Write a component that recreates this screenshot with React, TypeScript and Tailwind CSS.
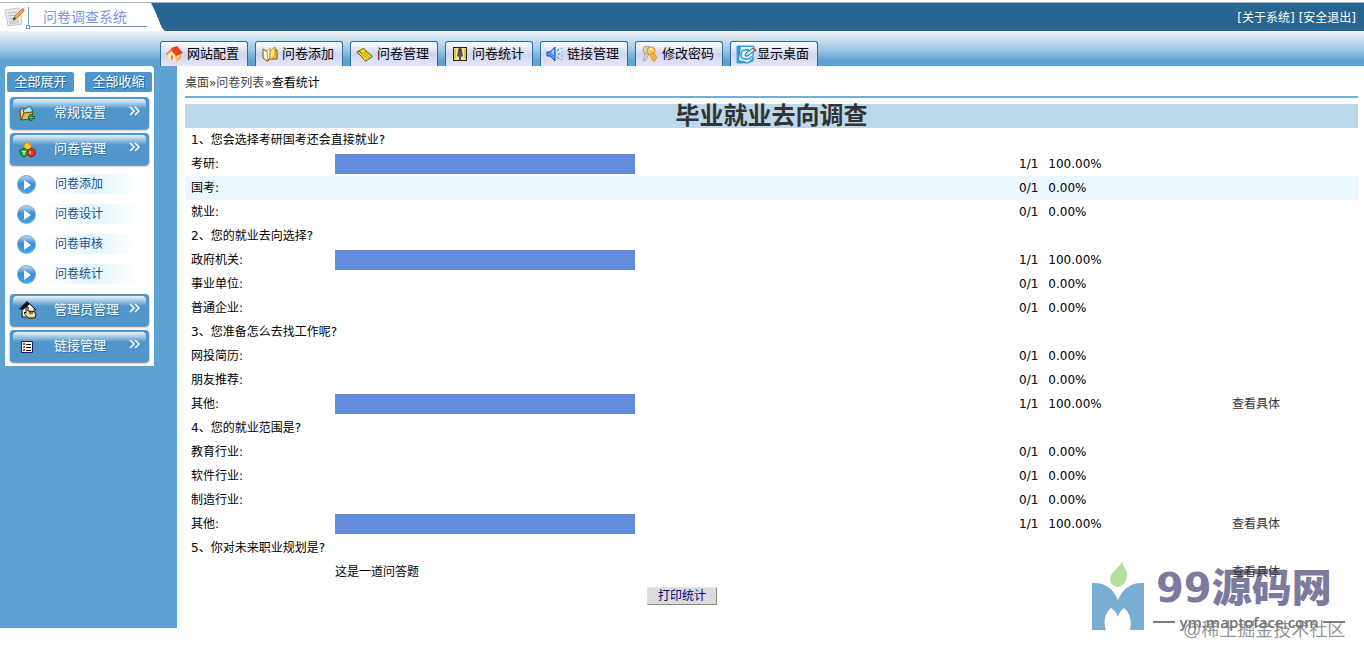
import React from 'react';

type Answer = { label: string; votes: number; total: number; detail?: boolean; active?: boolean };
type Question = { title: string; answers: Answer[]; note?: string };

const questions: Question[] = [
  {
    title: '1、您会选择考研国考还会直接就业?',
    answers: [
      { label: '考研:', votes: 1, total: 1 },
      { label: '国考:', votes: 0, total: 1, active: true },
      { label: '就业:', votes: 0, total: 1 },
    ],
  },
  {
    title: '2、您的就业去向选择?',
    answers: [
      { label: '政府机关:', votes: 1, total: 1 },
      { label: '事业单位:', votes: 0, total: 1 },
      { label: '普通企业:', votes: 0, total: 1 },
    ],
  },
  {
    title: '3、您准备怎么去找工作呢?',
    answers: [
      { label: '网投简历:', votes: 0, total: 1 },
      { label: '朋友推荐:', votes: 0, total: 1 },
      { label: '其他:', votes: 1, total: 1, detail: true },
    ],
  },
  {
    title: '4、您的就业范围是?',
    answers: [
      { label: '教育行业:', votes: 0, total: 1 },
      { label: '软件行业:', votes: 0, total: 1 },
      { label: '制造行业:', votes: 0, total: 1 },
      { label: '其他:', votes: 1, total: 1, detail: true },
    ],
  },
  { title: '5、你对未来职业规划是?', answers: [], note: '这是一道问答题' },
];

const HouseIcon = () => (
  <svg width="18" height="18" viewBox="0 0 18 18">
    <path d="M2 9l4-4 4 5v7l-8-4z" fill="#ffe2ae" />
    <path d="M9 10l6-2v6l-5 3z" fill="#f6b45c" />
    <path d="M0 9l6-6 4 5-1 2-4-4-4 4z" fill="#f3703a" />
    <path d="M5 3l6-2 6 7-7 3z" fill="#e64216" />
    <path d="M5 10l2 1v4l-2-1z" fill="#d08a3a" />
    <path d="M11 11l2-1v2l-2 1z" fill="#fff0c0" />
  </svg>
);

const BookIcon = () => (
  <svg width="18" height="18" viewBox="0 0 18 18">
    <path d="M2 4l5 3v9H6l-4-3z" fill="#fff6cf" stroke="#7a5200" />
    <path d="M6 6l3-3v10l-2 3z" fill="#fff" stroke="#c9a24a" />
    <path d="M7 16l1-2h8V5l-2-1" fill="#ffc936" stroke="#7a5200" />
    <path d="M9 6l5-4v9l-5 4z" fill="#ffe58c" stroke="#b98a18" />
  </svg>
);

const ScrollIcon = () => (
  <svg width="18" height="18" viewBox="0 0 18 18">
    <path d="M1 7l5-3c2-1 3 0 4 2l6 5c0 2-1 2-2 2l-4 3c-2 0-2-2-4-4L3 9C2 9 1 8 1 7z" fill="#f0d92c" stroke="#6d5c00" />
    <path d="M2 7c2-1 3 0 4 2" fill="none" stroke="#6d5c00" />
    <path d="M7 7l6 5M9 6l5 4M6 9l5 4" stroke="#b59d10" />
  </svg>
);

const StatIcon = () => (
  <svg width="18" height="18" viewBox="0 0 18 18">
    <rect x="2.500" y="2.500" width="13" height="13" fill="#ffe08c" stroke="#2c2410" />
    <path d="M7 3h4v12H7z" fill="#fff3c4" />
    <circle cx="9" cy="5" r="2" fill="#444" />
    <path d="M7 6h4l1 5-2 1v3H8v-3l-2-1z" fill="#555" />
    <path d="M4 4v10M14 4v10" stroke="#c69a33" />
  </svg>
);

const SpeakerIcon = () => (
  <svg width="18" height="18" viewBox="0 0 18 18">
    <path d="M1 7h3l5-5v14l-5-5H1z" fill="#4a9cf7" stroke="#1553c4" />
    <path d="M5 7l3-3v6z" fill="#a9d5ff" />
    <path d="M11 6l2-2M12 9h2M11 12l2 2M15 4l1-1M16 7h1M16 11h1M15 14l1 1" stroke="#6f9ff0" strokeWidth="1.500" />
  </svg>
);

const KeysIcon = () => (
  <svg width="18" height="18" viewBox="0 0 18 18">
    <path d="M5 7l-3 8 2 1 4-7" fill="#d8d4c8" stroke="#aaa598" />
    <circle cx="6" cy="5" r="4" fill="#d8d2bc" stroke="#a9a494" />
    <circle cx="10" cy="6" r="4" fill="#ffc94d" stroke="#d6962a" />
    <circle cx="10" cy="4" r="1.200" fill="#fff" />
    <path d="M9 9l3 7h2v-2l2-1-3-5z" fill="#fdb62f" stroke="#d6962a" />
  </svg>
);

const DesktopIcon = () => (
  <svg width="21" height="20" viewBox="0 0 21 20">
    <path d="M1 2h17l-1 15-5 2H1z" fill="#2b94cf" stroke="#4aa6d8" />
    <path d="M5 3h12l-1 12-4 3-9-2z" fill="#f4fbff" />
    <path d="M13 6H9c-3 0-4 2-4 5s1 4 4 4h3c2 0 3-1 3-3" fill="none" stroke="#43b4de" strokeWidth="2" />
    <path d="M9 12l1-3 7-5 2 2-7 6z" fill="#bfe7f5" stroke="#17679b" />
    <path d="M18 5l2 2" stroke="#c24a20" strokeWidth="2" />
  </svg>
);

const FolderIcon = () => (
  <svg width="17" height="17" viewBox="0 0 17 17">
    <path d="M1 5l3-2 2 1v10l-4 1z" fill="#f2cf72" stroke="#5c4a18" />
    <path d="M4 5l7-4 3 5-8 5z" fill="#a5e2f5" stroke="#315a7a" />
    <path d="M2 15l3-7 9-1-2 7z" fill="#e3b557" stroke="#5c4a18" />
    <path d="M12 9v7M9 12.500h7" stroke="#0e6b2a" strokeWidth="3" />
    <path d="M12 10v5M10 12.500h5" stroke="#3ed05c" />
  </svg>
);

const CubesIcon = () => (
  <svg width="17" height="17" viewBox="0 0 17 17">
    <path d="M8 1l4 3v5H5V4z" fill="#ffc832" stroke="#d68a10" />
    <path d="M1 9l4-2 4 2v4l-4 3-4-3z" fill="#28a838" stroke="#0d6b20" />
    <path d="M3 10l2 1 2-1M5 11v3" stroke="#fff" fill="none" />
    <path d="M9 9l3-2 4 2v5l-4 2-3-2z" fill="#e93526" stroke="#a61209" />
    <path d="M11 10v3" stroke="#fff" />
  </svg>
);

const HandHouseIcon = () => (
  <svg width="18" height="18" viewBox="0 0 18 18">
    <path d="M3 9l6-7 7 7-2 2v5H4z" fill="#fff" />
    <path d="M0 8l8-8 3 3-7 6z" fill="#111" />
    <path d="M10 2l7 7h-3M3 9v7h4" fill="none" stroke="#111" />
    <path d="M7 6h2v4h2l5 1 1 2-1 4H9l-4-5 1-1 1 1z" fill="#ffd59a" stroke="#111" />
    <path d="M11 10v3M13 11v2" stroke="#111" />
  </svg>
);

const ListIcon = () => (
  <svg width="17" height="17" viewBox="0 0 17 17">
    <path d="M2.500 3.500h11v11h-11z" fill="#fff" stroke="#1b1b5a" />
    <path d="M4 5h2v2H4zM4 11h2v2H4z" fill="#d42a1c" />
    <path d="M4 8h2v2H4z" fill="#2aa23a" />
    <path d="M7 6.500h5M7 9.500h5M7 12.500h5" stroke="#111" />
  </svg>
);

const PlayIcon = () => (
  <svg width="19" height="19" viewBox="0 0 19 19">
    <defs>
      <linearGradient id="play" x1="0" y1="0" x2="0" y2="1">
        <stop offset="0" stopColor="#c4dcf2" />
        <stop offset="0.450" stopColor="#3b8bd6" />
        <stop offset="1" stopColor="#36abf6" />
      </linearGradient>
    </defs>
    <circle cx="9.500" cy="9.500" r="9" fill="url(#play)" stroke="#7aa7cf" />
    <path d="M7 5l7 5-7 5z" fill="#fff" />
  </svg>
);

const NoteIcon = () => (
  <svg width="20" height="21" viewBox="0 0 20 21">
    <path d="M0 3l13-2 2 2 2 14-14 2z" fill="#e9eaea" stroke="#c3c6c6" />
    <path d="M3 6l9-1M3 9l8-1M4 12l6-1M4 15l10-2M5 17l9-2" stroke="#b3b9bd" />
    <path d="M8 13l2-4 7-7 2 2-7 7z" fill="#f0b04a" stroke="#b57a30" />
    <path d="M16 3l2-2 2 2-2 2z" fill="#d97a68" />
    <path d="M8 13l1-3 2 2z" fill="#333" />
  </svg>
);

const Chevrons = () => (
  <svg width="11" height="10" viewBox="0 0 11 10" fill="none" stroke="#fff" strokeWidth="1.500">
    <path d="M1 1l4 4-4 4M6 1l4 4-4 4" />
  </svg>
);

const tabs = [
  { label: '网站配置', icon: <HouseIcon /> },
  { label: '问卷添加', icon: <BookIcon /> },
  { label: '问卷管理', icon: <ScrollIcon /> },
  { label: '问卷统计', icon: <StatIcon /> },
  { label: '链接管理', icon: <SpeakerIcon /> },
  { label: '修改密码', icon: <KeysIcon /> },
  { label: '显示桌面', icon: <DesktopIcon /> },
];

const MenuHeader = ({ label, icon }: { label: string; icon: React.ReactNode }) => (
  <button
    type="button"
    className="relative flex h-8 w-full items-center rounded bg-[#5096cb] pr-2 pl-2 text-[13px] text-white shadow-[0_1px_2px_#64748b]"
  >
    <span className="absolute inset-x-[3px] top-0.5 h-2.5 rounded-t bg-linear-to-b from-white/90 to-white/0" />
    <span className="relative flex w-9 items-center pl-px">{icon}</span>
    <span className="relative flex-1 text-left [text-shadow:1px_1px_1px_#2f6e9f]">{label}</span>
    <span className="relative pr-px pb-1">
      <Chevrons />
    </span>
  </button>
);

const Sidebar = () => (
  <aside className="w-[177px] shrink-0 bg-[#5ea2d2] pl-[5px]">
    <div className="w-[149px] rounded-t bg-white px-[5px] pt-1.5 pb-1">
      <div className="-mx-[3px] mb-[5px] flex justify-between">
        {['全部展开', '全部收缩'].map((label) => (
          <button
            key={label}
            type="button"
            className="h-5 w-[67px] rounded-xs bg-[#4d96cb] text-[13px] leading-5 text-white [text-shadow:1px_1px_0_#1f5f92]"
          >
            {label}
          </button>
        ))}
      </div>
      <nav className="flex flex-col gap-1">
        <MenuHeader label="常规设置" icon={<FolderIcon />} />
        <MenuHeader label="问卷管理" icon={<CubesIcon />} />
        <ul className="pb-px">
          {['问卷添加', '问卷设计', '问卷审核', '问卷统计'].map((label) => (
            <li key={label}>
              <a href="#" className="flex h-[30px] items-center pl-[7px] text-[#14508c]">
                <PlayIcon />
                <span className="ml-2 w-24 bg-linear-to-r from-white via-[#e2f5fc] to-white pl-[11px] leading-5">
                  {label}
                </span>
              </a>
            </li>
          ))}
        </ul>
        <MenuHeader label="管理员管理" icon={<HandHouseIcon />} />
        <MenuHeader label="链接管理" icon={<ListIcon />} />
      </nav>
    </div>
  </aside>
);

const Header = () => (
  <header>
    <div className="mt-0.5 flex h-[29px] items-stretch justify-between border-t border-[#9fb4c4] bg-[#28658f]">
      <div className="flex w-[166px] bg-white pt-1 pl-[5px] [clip-path:polygon(0_0,151px_0,155px_8px,162px_25px,165px_100%,0_100%)]">
        <NoteIcon />
        <div className="relative ml-[3px] h-5 w-[119px] border-b border-l border-[#6d9fcb] pl-3.5 text-sm leading-5 text-[#7f93df]">
          问卷调查系统
          <span className="absolute -bottom-[3px] -left-[3px] size-1 border border-[#6d9fcb] bg-white" />
        </div>
      </div>
      <div className="flex items-center gap-1 pt-0.5 pr-2 text-white">
        <a href="#">[关于系统]</a>
        <a href="#">[安全退出]</a>
      </div>
    </div>
    <nav className="flex h-[35px] items-end gap-[7px] bg-linear-to-b from-[#f0f5f2] via-[#a5c9e8] to-[#5ea2d2] to-85% pl-40">
      {tabs.map((tab) => (
        <a
          key={tab.label}
          href="#"
          className="flex h-[25px] w-[88px] items-center rounded-t-[3px] border border-b-0 border-[#2a709c] bg-linear-to-b from-white via-[#cfd6ef] to-[#e5e4fa] pl-[5px] text-[13px] text-black"
        >
          <span className="flex w-[21px] shrink-0 items-center">{tab.icon}</span>
          <span className="whitespace-nowrap">{tab.label}</span>
        </a>
      ))}
    </nav>
  </header>
);

const ResultTable = () => (
  <table className="w-full table-fixed border-collapse">
    <colgroup>
      <col className="w-36" />
      <col />
      <col className="w-[213px]" />
      <col className="w-[132px]" />
    </colgroup>
    <thead>
      <tr className="h-6 bg-[#bcd8eb]">
        <th colSpan={4} className="p-0 text-2xl leading-6 font-bold text-[#333]">
          毕业就业去向调查
        </th>
      </tr>
    </thead>
    {questions.map((q) => (
      <tbody key={q.title}>
        <tr className="h-6">
          <td colSpan={4} className="px-1.5 py-0">{q.title}</td>
        </tr>
        {q.answers.map((a) => {
          const percent = (a.votes / a.total) * 100;
          return (
            <tr key={a.label} className={a.active ? 'h-6 bg-[#eaf7fe]' : 'h-6'}>
              <td className="px-1.5 py-0">{a.label}</td>
              <td className="px-1.5 py-0">
                <div className="w-[300px]">
                  <div className="h-5 bg-[#628bde]" style={{ width: `${percent}%` }} />
                </div>
              </td>
              <td className="px-1.5 py-0">
                <span className="mr-2.5">{a.votes}/{a.total}</span>
                <span>{percent.toFixed(2)}%</span>
              </td>
              <td className="px-1.5 py-0">
                {a.detail && <a href="#" className="text-[#333]">查看具体</a>}
              </td>
            </tr>
          );
        })}
        {q.note && (
          <tr className="h-6">
            <td />
            <td className="px-1.5 py-0">{q.note}</td>
            <td />
            <td className="relative z-10 px-1.5 py-0">
              <a href="#" className="text-[#333]">查看具体</a>
            </td>
          </tr>
        )}
      </tbody>
    ))}
  </table>
);

const Watermark = () => (
  <div className="pointer-events-none absolute right-[19px] bottom-4 flex items-end gap-2">
    <svg width="53" height="70" viewBox="0 0 53 70" className="mb-[11px]">
      <path d="M30 0c-1 6-12 11-12 18 0 5 4 8 8 8 5-1 9-5 9-12 0-6-4-8-5-14z" fill="#b4e09c" />
      <path
        d="M0 22c12-1 21 5 26 17 5-12 14-18 26-17v47H38c2-9 0-17-6-22-3 2-5 5-6 9-1-4-4-7-7-9-6 5-8 13-5 22H0z"
        fill="#7aadd3"
      />
    </svg>
    <div className="flex w-[192px] flex-col">
      <span className="pl-[3px] text-[40px] leading-[44px] font-black whitespace-nowrap text-[#7d7b9d]">99源码网</span>
      <span className="flex items-center gap-1 text-[#73717f]">
        <span className="h-0.5 w-[22px] bg-[#7d7b90]" />
        <span className="flex-1 text-center font-['Open_Sans',sans-serif] text-[15px] leading-6 font-semibold">
          ym.maptoface.com
        </span>
        <span className="h-0.5 w-[22px] bg-[#7d7b90]" />
      </span>
      <span className="-mt-4 pl-[30px] font-['Liberation_Sans','Noto_Sans_CJK_SC',sans-serif] text-lg leading-6 whitespace-nowrap text-[#777]/80">
        @稀土掘金技术社区
      </span>
    </div>
  </div>
);

export default function App() {
  return (
    <div className="relative flow-root min-h-screen bg-white font-['DejaVu_Sans','Noto_Sans_CJK_SC',sans-serif] text-xs text-black">
      <Header />
      <div className="flex">
        <Sidebar />
        <main className="min-w-0 flex-1 pb-[23px]">
          <div className="pr-1.5 pl-2">
            <div className="mb-1.5 border-b-2 border-[#78add5] pt-[9px] pb-[5px] leading-4 text-[#444]">
              <a href="#">桌面</a>»<a href="#">问卷列表</a>»<span className="text-black">查看统计</span>
            </div>
            <ResultTable />
          </div>
          <div className="flex justify-center pt-[3px] pr-[177px]">
            <button
              type="button"
              className="h-[18px] w-[70px] border border-t-[#e4e4e4] border-r-[#888] border-b-[#888] border-l-[#e4e4e4] bg-[#dadcdc] leading-4 text-[#000080]"
            >
              打印统计
            </button>
          </div>
        </main>
      </div>
      <Watermark />
    </div>
  );
}
